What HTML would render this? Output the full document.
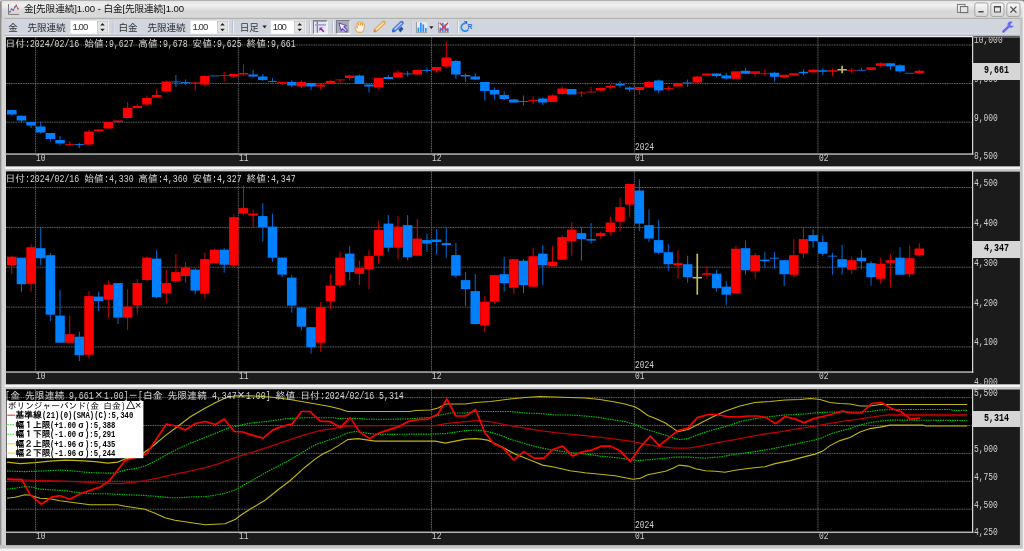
<!DOCTYPE html>
<html lang="ja"><head><meta charset="utf-8"><title>chart</title><style>
html,body{margin:0;padding:0;background:#e6e6e6;}
body{width:1024px;height:551px;overflow:hidden;position:relative;}
svg{position:absolute;left:0;top:0;}
#pg{position:absolute;left:0;top:0;width:1024px;height:551px;overflow:hidden;filter:blur(0.38px);}
.t,.ui{position:absolute;white-space:nowrap;}
#tx{position:absolute;left:0;top:0;width:1024px;height:551px;will-change:transform;}
.t{font-family:"Liberation Mono","IPAGothic",monospace;line-height:10px;color:#d4d4d4;}
.t .l{display:inline-block;white-space:pre;transform-origin:0 50%;vertical-align:baseline;line-height:10px;}
.t .f{display:inline-block;text-align:center;line-height:9px;}
.info{font-size:9.8px;}
.info .l{font-size:10.9px;transform:scaleX(0.7538);}
.info .f{width:9.8px;}
.info .g{font-size:12.7px;}
.ax{font-size:9.8px;}
.ax .l{font-size:10.9px;transform:scaleX(0.7309);}
.ax .f{width:9.8px;}
.ax .g{font-size:12.7px;}
.pb{font-size:9.8px;}
.pb .l{font-size:10.7px;transform:scaleX(0.7788);}
.pb .f{width:9.8px;}
.pb .g{font-size:12.7px;}
.lg{font-size:8.7px;}
.lg .l{font-size:9.7px;transform:scaleX(0.7474);}
.lg .f{width:8.7px;}
.lg .g{font-size:11.3px;}

.ax{color:#cfcfcf;}
.pb{color:#000;background:#d6d6d6;font-weight:bold;text-align:center;}
.cc{position:absolute;overflow:hidden;}
.lg{color:#000;line-height:9.5px;}
.lg .l{line-height:9.5px;}
.b{font-weight:bold;}
.ui{font-family:"Liberation Sans","Noto Sans CJK JP",sans-serif;font-size:9.6px;line-height:12px;color:#111;letter-spacing:-0.08px;}
.tb{color:#333;}
.sp{letter-spacing:-1.0px;}
</style></head><body>
<div id="pg">
<svg width="1024" height="551" viewBox="0 0 1024 551">
<rect x="0.00" y="0.00" width="1024.00" height="551.00" fill="#c8c8c8"/>
<defs><linearGradient id="tg" x1="0" y1="0" x2="0" y2="1"><stop offset="0" stop-color="#e3e3e3"/><stop offset="0.25" stop-color="#f0f0f0"/><stop offset="0.58" stop-color="#d8d8d8"/><stop offset="1" stop-color="#d8d8d8"/></linearGradient><linearGradient id="bg" x1="0" y1="0" x2="0" y2="1"><stop offset="0" stop-color="#fbfbfb"/><stop offset="1" stop-color="#d4d4d4"/></linearGradient></defs>
<rect x="1.40" y="1.00" width="1022.00" height="17.00" fill="url(#tg)"/>
<rect x="0.00" y="0.00" width="1024.00" height="0.90" fill="#adadad"/>
<rect x="1.40" y="17.80" width="1021.40" height="1.20" fill="#b2b2b2"/>
<rect x="4.70" y="19.00" width="1015.30" height="15.90" fill="#d1d5de"/>
<rect x="4.70" y="33.00" width="1015.30" height="1.80" fill="#d8dce3"/>
<rect x="4.70" y="34.80" width="1015.30" height="1.00" fill="#9ca4b2"/>
<rect x="0.00" y="0.00" width="1.60" height="548.60" fill="#8e8e8e"/>
<rect x="1022.50" y="1.00" width="1.50" height="551.00" fill="#f0f0f0"/>
<rect x="1.60" y="18.00" width="3.10" height="530.60" fill="#d4d4d4"/>
<rect x="1019.90" y="18.00" width="2.60" height="530.60" fill="#c4c4c4"/>
<rect x="0.00" y="545.00" width="1022.50" height="3.60" fill="#c4c4c4"/>
<rect x="0.00" y="548.60" width="1024.00" height="2.40" fill="#f2f2f2"/>
<path d="M0 0 H3 A3 3 0 0 0 0 3z" fill="#d8d8d8"/><path d="M1024 0 H1020.5 A3.5 3.5 0 0 1 1024 3.5z" fill="#777"/>
<rect x="5.80" y="37.20" width="1014.10" height="129.20" fill="#1b1b1b"/>
<rect x="4.70" y="35.80" width="1015.30" height="1.60" fill="#f2f2f2"/>
<rect x="973.20" y="36.30" width="46.60" height="1.10" fill="#1b1b1b"/>
<rect x="4.70" y="36.20" width="1.30" height="130.20" fill="#d4d4d4"/>
<rect x="6.00" y="37.40" width="966.40" height="116.00" fill="#000"/>
<rect x="4.70" y="153.40" width="968.70" height="1.30" fill="#c8c8c8"/>
<rect x="972.00" y="36.20" width="1.20" height="118.50" fill="#d8d8d8"/>
<rect x="5.80" y="171.30" width="1014.10" height="213.10" fill="#1b1b1b"/>
<rect x="4.70" y="166.70" width="1015.30" height="2.50" fill="#f4f4f4"/>
<rect x="4.70" y="169.10" width="1015.30" height="2.40" fill="#c8c8c8"/>
<rect x="4.70" y="170.30" width="1.30" height="214.10" fill="#d4d4d4"/>
<rect x="6.00" y="171.50" width="966.40" height="199.90" fill="#000"/>
<rect x="4.70" y="371.40" width="968.70" height="1.30" fill="#c8c8c8"/>
<rect x="972.00" y="170.30" width="1.20" height="202.40" fill="#d8d8d8"/>
<rect x="5.80" y="389.20" width="1014.10" height="155.90" fill="#1b1b1b"/>
<rect x="4.70" y="384.60" width="1015.30" height="2.50" fill="#f4f4f4"/>
<rect x="4.70" y="387.00" width="1015.30" height="2.40" fill="#c8c8c8"/>
<rect x="4.70" y="388.20" width="1.30" height="156.90" fill="#d4d4d4"/>
<rect x="6.00" y="389.40" width="966.40" height="142.20" fill="#000"/>
<rect x="4.70" y="531.60" width="968.70" height="1.30" fill="#c8c8c8"/>
<rect x="972.00" y="388.20" width="1.20" height="144.70" fill="#d8d8d8"/>
<line x1="6.00" y1="45.00" x2="972.40" y2="45.00" stroke="#8c8c8c" stroke-width="0.65" stroke-dasharray="1.7 0.7"/>
<line x1="6.00" y1="83.50" x2="972.40" y2="83.50" stroke="#8c8c8c" stroke-width="0.65" stroke-dasharray="1.7 0.7"/>
<line x1="6.00" y1="122.20" x2="972.40" y2="122.20" stroke="#8c8c8c" stroke-width="0.65" stroke-dasharray="1.7 0.7"/>
<line x1="35.48" y1="37.40" x2="35.48" y2="153.40" stroke="#8c8c8c" stroke-width="0.65" stroke-dasharray="1.7 0.7"/>
<line x1="238.34" y1="37.40" x2="238.34" y2="153.40" stroke="#8c8c8c" stroke-width="0.65" stroke-dasharray="1.7 0.7"/>
<line x1="431.54" y1="37.40" x2="431.54" y2="153.40" stroke="#8c8c8c" stroke-width="0.65" stroke-dasharray="1.7 0.7"/>
<line x1="634.40" y1="37.40" x2="634.40" y2="153.40" stroke="#8c8c8c" stroke-width="0.65" stroke-dasharray="1.7 0.7"/>
<line x1="817.94" y1="37.40" x2="817.94" y2="153.40" stroke="#8c8c8c" stroke-width="0.65" stroke-dasharray="1.7 0.7"/>
<line x1="6.00" y1="187.50" x2="972.40" y2="187.50" stroke="#8c8c8c" stroke-width="0.65" stroke-dasharray="1.7 0.7"/>
<line x1="6.00" y1="227.40" x2="972.40" y2="227.40" stroke="#8c8c8c" stroke-width="0.65" stroke-dasharray="1.7 0.7"/>
<line x1="6.00" y1="267.20" x2="972.40" y2="267.20" stroke="#8c8c8c" stroke-width="0.65" stroke-dasharray="1.7 0.7"/>
<line x1="6.00" y1="307.10" x2="972.40" y2="307.10" stroke="#8c8c8c" stroke-width="0.65" stroke-dasharray="1.7 0.7"/>
<line x1="6.00" y1="346.90" x2="972.40" y2="346.90" stroke="#8c8c8c" stroke-width="0.65" stroke-dasharray="1.7 0.7"/>
<line x1="35.48" y1="171.50" x2="35.48" y2="371.40" stroke="#8c8c8c" stroke-width="0.65" stroke-dasharray="1.7 0.7"/>
<line x1="238.34" y1="171.50" x2="238.34" y2="371.40" stroke="#8c8c8c" stroke-width="0.65" stroke-dasharray="1.7 0.7"/>
<line x1="431.54" y1="171.50" x2="431.54" y2="371.40" stroke="#8c8c8c" stroke-width="0.65" stroke-dasharray="1.7 0.7"/>
<line x1="634.40" y1="171.50" x2="634.40" y2="371.40" stroke="#8c8c8c" stroke-width="0.65" stroke-dasharray="1.7 0.7"/>
<line x1="817.94" y1="171.50" x2="817.94" y2="371.40" stroke="#8c8c8c" stroke-width="0.65" stroke-dasharray="1.7 0.7"/>
<line x1="6.00" y1="397.60" x2="972.40" y2="397.60" stroke="#8c8c8c" stroke-width="0.65" stroke-dasharray="1.7 0.7"/>
<line x1="6.00" y1="425.50" x2="972.40" y2="425.50" stroke="#8c8c8c" stroke-width="0.65" stroke-dasharray="1.7 0.7"/>
<line x1="6.00" y1="453.40" x2="972.40" y2="453.40" stroke="#8c8c8c" stroke-width="0.65" stroke-dasharray="1.7 0.7"/>
<line x1="6.00" y1="481.30" x2="972.40" y2="481.30" stroke="#8c8c8c" stroke-width="0.65" stroke-dasharray="1.7 0.7"/>
<line x1="6.00" y1="509.20" x2="972.40" y2="509.20" stroke="#8c8c8c" stroke-width="0.65" stroke-dasharray="1.7 0.7"/>
<line x1="35.48" y1="389.40" x2="35.48" y2="531.60" stroke="#8c8c8c" stroke-width="0.65" stroke-dasharray="1.7 0.7"/>
<line x1="238.34" y1="389.40" x2="238.34" y2="531.60" stroke="#8c8c8c" stroke-width="0.65" stroke-dasharray="1.7 0.7"/>
<line x1="431.54" y1="389.40" x2="431.54" y2="531.60" stroke="#8c8c8c" stroke-width="0.65" stroke-dasharray="1.7 0.7"/>
<line x1="634.40" y1="389.40" x2="634.40" y2="531.60" stroke="#8c8c8c" stroke-width="0.65" stroke-dasharray="1.7 0.7"/>
<line x1="817.94" y1="389.40" x2="817.94" y2="531.60" stroke="#8c8c8c" stroke-width="0.65" stroke-dasharray="1.7 0.7"/>
<line x1="11.78" y1="110.00" x2="11.78" y2="115.50" stroke="#0080ff" stroke-width="0.85"/>
<rect x="7.03" y="110.00" width="9.50" height="4.50" fill="#0080ff"/>
<line x1="21.43" y1="115.75" x2="21.43" y2="122.00" stroke="#0080ff" stroke-width="0.85"/>
<rect x="16.68" y="115.75" width="9.50" height="4.75" fill="#0080ff"/>
<line x1="31.09" y1="122.00" x2="31.09" y2="128.00" stroke="#0080ff" stroke-width="0.85"/>
<rect x="26.34" y="122.00" width="9.50" height="3.50" fill="#0080ff"/>
<line x1="40.74" y1="121.50" x2="40.74" y2="133.50" stroke="#0080ff" stroke-width="0.85"/>
<rect x="35.99" y="126.50" width="9.50" height="6.00" fill="#0080ff"/>
<line x1="50.40" y1="133.00" x2="50.40" y2="141.50" stroke="#0080ff" stroke-width="0.85"/>
<rect x="45.65" y="133.00" width="9.50" height="6.00" fill="#0080ff"/>
<line x1="60.05" y1="136.00" x2="60.05" y2="145.50" stroke="#0080ff" stroke-width="0.85"/>
<rect x="55.30" y="140.00" width="9.50" height="3.50" fill="#0080ff"/>
<line x1="69.71" y1="141.00" x2="69.71" y2="145.00" stroke="#ff0000" stroke-width="0.85"/>
<rect x="64.96" y="144.00" width="9.50" height="0.85" fill="#ff0000"/>
<line x1="79.36" y1="143.00" x2="79.36" y2="148.00" stroke="#0080ff" stroke-width="0.85"/>
<rect x="74.61" y="144.00" width="9.50" height="0.85" fill="#0080ff"/>
<line x1="89.02" y1="130.00" x2="89.02" y2="145.00" stroke="#ff0000" stroke-width="0.85"/>
<rect x="84.27" y="131.50" width="9.50" height="13.00" fill="#ff0000"/>
<line x1="98.67" y1="129.50" x2="98.67" y2="132.50" stroke="#ff0000" stroke-width="0.85"/>
<rect x="93.92" y="129.50" width="9.50" height="1.50" fill="#ff0000"/>
<rect x="103.58" y="122.00" width="9.50" height="6.50" fill="#ff0000"/>
<line x1="117.98" y1="120.50" x2="117.98" y2="123.00" stroke="#ff0000" stroke-width="0.85"/>
<rect x="113.23" y="120.50" width="9.50" height="1.50" fill="#ff0000"/>
<line x1="127.64" y1="102.00" x2="127.64" y2="118.00" stroke="#ff0000" stroke-width="0.85"/>
<rect x="122.89" y="108.00" width="9.50" height="10.00" fill="#ff0000"/>
<line x1="137.29" y1="104.50" x2="137.29" y2="108.00" stroke="#ff0000" stroke-width="0.85"/>
<rect x="132.54" y="106.00" width="9.50" height="2.00" fill="#ff0000"/>
<line x1="146.95" y1="95.50" x2="146.95" y2="106.00" stroke="#ff0000" stroke-width="0.85"/>
<rect x="142.20" y="98.00" width="9.50" height="6.50" fill="#ff0000"/>
<line x1="156.60" y1="89.50" x2="156.60" y2="97.50" stroke="#ff0000" stroke-width="0.85"/>
<rect x="151.85" y="95.00" width="9.50" height="2.50" fill="#ff0000"/>
<line x1="166.26" y1="80.50" x2="166.26" y2="92.50" stroke="#ff0000" stroke-width="0.85"/>
<rect x="161.51" y="81.50" width="9.50" height="10.00" fill="#ff0000"/>
<line x1="175.91" y1="75.00" x2="175.91" y2="87.00" stroke="#0080ff" stroke-width="0.85"/>
<rect x="171.16" y="81.50" width="9.50" height="0.85" fill="#0080ff"/>
<line x1="185.57" y1="79.50" x2="185.57" y2="85.00" stroke="#0080ff" stroke-width="0.85"/>
<rect x="180.82" y="82.00" width="9.50" height="0.85" fill="#0080ff"/>
<line x1="195.22" y1="82.00" x2="195.22" y2="90.50" stroke="#ff0000" stroke-width="0.85"/>
<rect x="190.47" y="82.50" width="9.50" height="0.85" fill="#ff0000"/>
<line x1="204.88" y1="75.00" x2="204.88" y2="86.50" stroke="#ff0000" stroke-width="0.85"/>
<rect x="200.13" y="76.00" width="9.50" height="8.50" fill="#ff0000"/>
<rect x="209.78" y="75.50" width="9.50" height="0.85" fill="#0080ff"/>
<line x1="224.19" y1="72.00" x2="224.19" y2="81.50" stroke="#ff0000" stroke-width="0.85"/>
<rect x="219.44" y="75.00" width="9.50" height="0.85" fill="#ff0000"/>
<line x1="233.84" y1="74.00" x2="233.84" y2="78.00" stroke="#ff0000" stroke-width="0.85"/>
<rect x="229.09" y="74.00" width="9.50" height="2.50" fill="#ff0000"/>
<line x1="243.50" y1="64.50" x2="243.50" y2="75.50" stroke="#ff0000" stroke-width="0.85"/>
<rect x="238.75" y="73.00" width="9.50" height="1.50" fill="#ff0000"/>
<line x1="253.15" y1="70.00" x2="253.15" y2="77.50" stroke="#0080ff" stroke-width="0.85"/>
<rect x="248.40" y="74.50" width="9.50" height="2.00" fill="#0080ff"/>
<line x1="262.81" y1="74.00" x2="262.81" y2="81.00" stroke="#0080ff" stroke-width="0.85"/>
<rect x="258.06" y="76.50" width="9.50" height="3.50" fill="#0080ff"/>
<line x1="272.46" y1="78.00" x2="272.46" y2="82.50" stroke="#0080ff" stroke-width="0.85"/>
<rect x="267.71" y="81.00" width="9.50" height="0.85" fill="#0080ff"/>
<line x1="282.12" y1="82.00" x2="282.12" y2="85.50" stroke="#ff0000" stroke-width="0.85"/>
<rect x="277.37" y="82.00" width="9.50" height="0.85" fill="#ff0000"/>
<line x1="291.77" y1="80.00" x2="291.77" y2="87.00" stroke="#0080ff" stroke-width="0.85"/>
<rect x="287.02" y="82.00" width="9.50" height="3.50" fill="#0080ff"/>
<line x1="301.43" y1="80.50" x2="301.43" y2="88.00" stroke="#ff0000" stroke-width="0.85"/>
<rect x="296.68" y="82.00" width="9.50" height="4.50" fill="#ff0000"/>
<line x1="311.08" y1="83.00" x2="311.08" y2="90.00" stroke="#0080ff" stroke-width="0.85"/>
<rect x="306.33" y="83.00" width="9.50" height="3.50" fill="#0080ff"/>
<line x1="320.74" y1="83.00" x2="320.74" y2="90.00" stroke="#ff0000" stroke-width="0.85"/>
<rect x="315.99" y="84.50" width="9.50" height="2.00" fill="#ff0000"/>
<line x1="330.39" y1="80.00" x2="330.39" y2="84.00" stroke="#ff0000" stroke-width="0.85"/>
<rect x="325.64" y="81.00" width="9.50" height="3.00" fill="#ff0000"/>
<line x1="340.05" y1="79.50" x2="340.05" y2="83.50" stroke="#ff0000" stroke-width="0.85"/>
<rect x="335.30" y="79.50" width="9.50" height="0.85" fill="#ff0000"/>
<line x1="349.70" y1="75.00" x2="349.70" y2="80.50" stroke="#ff0000" stroke-width="0.85"/>
<rect x="344.95" y="75.50" width="9.50" height="2.50" fill="#ff0000"/>
<line x1="359.36" y1="74.50" x2="359.36" y2="84.00" stroke="#0080ff" stroke-width="0.85"/>
<rect x="354.61" y="75.50" width="9.50" height="8.50" fill="#0080ff"/>
<line x1="369.01" y1="84.50" x2="369.01" y2="92.50" stroke="#0080ff" stroke-width="0.85"/>
<rect x="364.26" y="84.50" width="9.50" height="2.00" fill="#0080ff"/>
<line x1="378.67" y1="78.00" x2="378.67" y2="89.50" stroke="#ff0000" stroke-width="0.85"/>
<rect x="373.92" y="78.00" width="9.50" height="9.50" fill="#ff0000"/>
<line x1="388.32" y1="75.00" x2="388.32" y2="79.00" stroke="#0080ff" stroke-width="0.85"/>
<rect x="383.57" y="77.00" width="9.50" height="2.00" fill="#0080ff"/>
<line x1="397.98" y1="70.00" x2="397.98" y2="77.50" stroke="#ff0000" stroke-width="0.85"/>
<rect x="393.23" y="72.50" width="9.50" height="5.00" fill="#ff0000"/>
<line x1="407.63" y1="71.00" x2="407.63" y2="76.50" stroke="#0080ff" stroke-width="0.85"/>
<rect x="402.88" y="73.50" width="9.50" height="0.85" fill="#0080ff"/>
<line x1="417.29" y1="69.50" x2="417.29" y2="75.50" stroke="#ff0000" stroke-width="0.85"/>
<rect x="412.54" y="70.00" width="9.50" height="4.50" fill="#ff0000"/>
<line x1="426.94" y1="67.50" x2="426.94" y2="72.50" stroke="#0080ff" stroke-width="0.85"/>
<rect x="422.19" y="70.00" width="9.50" height="0.85" fill="#0080ff"/>
<line x1="436.60" y1="67.00" x2="436.60" y2="72.50" stroke="#ff0000" stroke-width="0.85"/>
<rect x="431.85" y="67.00" width="9.50" height="3.50" fill="#ff0000"/>
<line x1="446.25" y1="41.50" x2="446.25" y2="68.00" stroke="#ff0000" stroke-width="0.85"/>
<rect x="441.50" y="57.50" width="9.50" height="9.00" fill="#ff0000"/>
<line x1="455.91" y1="60.00" x2="455.91" y2="79.00" stroke="#0080ff" stroke-width="0.85"/>
<rect x="451.16" y="61.00" width="9.50" height="13.50" fill="#0080ff"/>
<line x1="465.56" y1="73.50" x2="465.56" y2="82.00" stroke="#0080ff" stroke-width="0.85"/>
<rect x="460.81" y="75.00" width="9.50" height="1.50" fill="#0080ff"/>
<line x1="475.22" y1="73.50" x2="475.22" y2="79.50" stroke="#0080ff" stroke-width="0.85"/>
<rect x="470.47" y="76.50" width="9.50" height="3.00" fill="#0080ff"/>
<line x1="484.87" y1="82.00" x2="484.87" y2="100.50" stroke="#0080ff" stroke-width="0.85"/>
<rect x="480.12" y="82.00" width="9.50" height="9.00" fill="#0080ff"/>
<line x1="494.53" y1="87.50" x2="494.53" y2="99.50" stroke="#0080ff" stroke-width="0.85"/>
<rect x="489.78" y="90.00" width="9.50" height="4.50" fill="#0080ff"/>
<line x1="504.18" y1="91.50" x2="504.18" y2="100.00" stroke="#0080ff" stroke-width="0.85"/>
<rect x="499.43" y="95.00" width="9.50" height="4.00" fill="#0080ff"/>
<line x1="513.84" y1="99.00" x2="513.84" y2="102.50" stroke="#0080ff" stroke-width="0.85"/>
<rect x="509.09" y="99.50" width="9.50" height="3.00" fill="#0080ff"/>
<line x1="523.50" y1="95.50" x2="523.50" y2="105.50" stroke="#0080ff" stroke-width="0.85"/>
<rect x="518.75" y="101.00" width="9.50" height="0.85" fill="#0080ff"/>
<line x1="533.15" y1="96.50" x2="533.15" y2="104.00" stroke="#ff0000" stroke-width="0.85"/>
<rect x="528.40" y="100.00" width="9.50" height="0.85" fill="#ff0000"/>
<line x1="542.80" y1="97.50" x2="542.80" y2="105.00" stroke="#0080ff" stroke-width="0.85"/>
<rect x="538.05" y="98.50" width="9.50" height="4.00" fill="#0080ff"/>
<line x1="552.46" y1="94.50" x2="552.46" y2="102.00" stroke="#ff0000" stroke-width="0.85"/>
<rect x="547.71" y="95.50" width="9.50" height="6.50" fill="#ff0000"/>
<line x1="562.11" y1="86.50" x2="562.11" y2="94.50" stroke="#ff0000" stroke-width="0.85"/>
<rect x="557.36" y="88.50" width="9.50" height="5.50" fill="#ff0000"/>
<rect x="567.02" y="89.00" width="9.50" height="5.50" fill="#0080ff"/>
<line x1="581.42" y1="91.00" x2="581.42" y2="97.00" stroke="#ff0000" stroke-width="0.85"/>
<rect x="576.67" y="92.50" width="9.50" height="0.85" fill="#ff0000"/>
<line x1="591.08" y1="87.00" x2="591.08" y2="92.50" stroke="#ff0000" stroke-width="0.85"/>
<rect x="586.33" y="91.50" width="9.50" height="0.85" fill="#ff0000"/>
<line x1="600.73" y1="87.50" x2="600.73" y2="91.00" stroke="#ff0000" stroke-width="0.85"/>
<rect x="595.98" y="88.00" width="9.50" height="2.50" fill="#ff0000"/>
<line x1="610.39" y1="84.50" x2="610.39" y2="89.50" stroke="#ff0000" stroke-width="0.85"/>
<rect x="605.64" y="86.00" width="9.50" height="1.50" fill="#ff0000"/>
<line x1="620.04" y1="81.00" x2="620.04" y2="87.50" stroke="#0080ff" stroke-width="0.85"/>
<rect x="615.29" y="84.00" width="9.50" height="1.50" fill="#0080ff"/>
<line x1="629.70" y1="86.50" x2="629.70" y2="92.00" stroke="#0080ff" stroke-width="0.85"/>
<rect x="624.95" y="87.50" width="9.50" height="2.00" fill="#0080ff"/>
<line x1="639.35" y1="87.00" x2="639.35" y2="94.50" stroke="#ff0000" stroke-width="0.85"/>
<rect x="634.60" y="87.00" width="9.50" height="3.00" fill="#ff0000"/>
<line x1="649.01" y1="81.00" x2="649.01" y2="87.50" stroke="#ff0000" stroke-width="0.85"/>
<rect x="644.26" y="82.00" width="9.50" height="5.50" fill="#ff0000"/>
<line x1="658.66" y1="79.50" x2="658.66" y2="93.00" stroke="#0080ff" stroke-width="0.85"/>
<rect x="653.91" y="80.50" width="9.50" height="10.00" fill="#0080ff"/>
<line x1="668.32" y1="86.00" x2="668.32" y2="90.50" stroke="#ff0000" stroke-width="0.85"/>
<rect x="663.57" y="88.00" width="9.50" height="0.85" fill="#ff0000"/>
<rect x="673.22" y="83.00" width="9.50" height="3.50" fill="#ff0000"/>
<line x1="687.63" y1="79.50" x2="687.63" y2="87.00" stroke="#0080ff" stroke-width="0.85"/>
<rect x="682.88" y="82.50" width="9.50" height="0.85" fill="#0080ff"/>
<line x1="697.28" y1="75.50" x2="697.28" y2="82.50" stroke="#ff0000" stroke-width="0.85"/>
<rect x="692.53" y="76.50" width="9.50" height="6.00" fill="#ff0000"/>
<rect x="702.19" y="73.50" width="9.50" height="2.00" fill="#ff0000"/>
<line x1="716.59" y1="73.50" x2="716.59" y2="77.50" stroke="#0080ff" stroke-width="0.85"/>
<rect x="711.84" y="73.50" width="9.50" height="2.50" fill="#0080ff"/>
<line x1="726.25" y1="73.00" x2="726.25" y2="79.50" stroke="#0080ff" stroke-width="0.85"/>
<rect x="721.50" y="75.50" width="9.50" height="3.00" fill="#0080ff"/>
<rect x="731.15" y="71.30" width="9.50" height="7.50" fill="#ff0000"/>
<line x1="745.56" y1="67.80" x2="745.56" y2="73.80" stroke="#0080ff" stroke-width="0.85"/>
<rect x="740.81" y="70.80" width="9.50" height="3.00" fill="#0080ff"/>
<line x1="755.21" y1="71.30" x2="755.21" y2="76.30" stroke="#ff0000" stroke-width="0.85"/>
<rect x="750.46" y="71.30" width="9.50" height="2.50" fill="#ff0000"/>
<line x1="764.87" y1="69.30" x2="764.87" y2="75.80" stroke="#ff0000" stroke-width="0.85"/>
<rect x="760.12" y="73.30" width="9.50" height="0.85" fill="#ff0000"/>
<line x1="774.52" y1="71.80" x2="774.52" y2="81.80" stroke="#0080ff" stroke-width="0.85"/>
<rect x="769.77" y="72.80" width="9.50" height="4.00" fill="#0080ff"/>
<line x1="784.18" y1="74.80" x2="784.18" y2="78.30" stroke="#ff0000" stroke-width="0.85"/>
<rect x="779.43" y="74.80" width="9.50" height="2.50" fill="#ff0000"/>
<rect x="789.08" y="73.30" width="9.50" height="2.00" fill="#ff0000"/>
<line x1="803.49" y1="69.30" x2="803.49" y2="75.30" stroke="#0080ff" stroke-width="0.85"/>
<rect x="798.74" y="71.80" width="9.50" height="1.50" fill="#0080ff"/>
<line x1="813.14" y1="68.80" x2="813.14" y2="72.30" stroke="#ff0000" stroke-width="0.85"/>
<rect x="808.39" y="69.80" width="9.50" height="2.50" fill="#ff0000"/>
<line x1="822.80" y1="68.30" x2="822.80" y2="74.80" stroke="#0080ff" stroke-width="0.85"/>
<rect x="818.05" y="70.30" width="9.50" height="1.50" fill="#0080ff"/>
<line x1="832.45" y1="68.30" x2="832.45" y2="76.30" stroke="#ff0000" stroke-width="0.85"/>
<rect x="827.70" y="70.30" width="9.50" height="1.50" fill="#ff0000"/>
<line x1="842.11" y1="65.80" x2="842.11" y2="73.30" stroke="#c4bc5c" stroke-width="1.7"/>
<line x1="837.36" y1="69.80" x2="846.86" y2="69.80" stroke="#c4bc5c" stroke-width="1.5"/>
<line x1="851.76" y1="67.80" x2="851.76" y2="73.80" stroke="#ff0000" stroke-width="0.85"/>
<rect x="847.01" y="69.80" width="9.50" height="0.85" fill="#ff0000"/>
<line x1="861.42" y1="67.80" x2="861.42" y2="70.80" stroke="#0080ff" stroke-width="0.85"/>
<rect x="856.67" y="69.80" width="9.50" height="0.85" fill="#0080ff"/>
<rect x="866.32" y="67.30" width="9.50" height="2.50" fill="#ff0000"/>
<line x1="880.73" y1="62.30" x2="880.73" y2="67.30" stroke="#ff0000" stroke-width="0.85"/>
<rect x="875.98" y="63.30" width="9.50" height="2.50" fill="#ff0000"/>
<line x1="890.38" y1="63.30" x2="890.38" y2="69.80" stroke="#0080ff" stroke-width="0.85"/>
<rect x="885.63" y="63.30" width="9.50" height="3.00" fill="#0080ff"/>
<line x1="900.04" y1="64.30" x2="900.04" y2="72.80" stroke="#0080ff" stroke-width="0.85"/>
<rect x="895.29" y="65.30" width="9.50" height="6.00" fill="#0080ff"/>
<rect x="904.94" y="72.80" width="9.50" height="0.85" fill="#0080ff"/>
<line x1="919.35" y1="69.50" x2="919.35" y2="73.60" stroke="#ff0000" stroke-width="0.85"/>
<rect x="914.60" y="70.80" width="9.50" height="2.50" fill="#ff0000"/>
<line x1="11.78" y1="255.70" x2="11.78" y2="274.20" stroke="#ff0000" stroke-width="0.85"/>
<rect x="7.03" y="256.70" width="9.50" height="8.50" fill="#ff0000"/>
<line x1="21.43" y1="257.70" x2="21.43" y2="292.20" stroke="#0080ff" stroke-width="0.85"/>
<rect x="16.68" y="257.70" width="9.50" height="26.50" fill="#0080ff"/>
<line x1="31.09" y1="244.20" x2="31.09" y2="291.70" stroke="#ff0000" stroke-width="0.85"/>
<rect x="26.34" y="247.20" width="9.50" height="36.50" fill="#ff0000"/>
<line x1="40.74" y1="227.10" x2="40.74" y2="265.20" stroke="#0080ff" stroke-width="0.85"/>
<rect x="35.99" y="248.20" width="9.50" height="10.00" fill="#0080ff"/>
<line x1="50.40" y1="253.20" x2="50.40" y2="321.10" stroke="#0080ff" stroke-width="0.85"/>
<rect x="45.65" y="255.20" width="9.50" height="59.40" fill="#0080ff"/>
<line x1="60.05" y1="290.10" x2="60.05" y2="342.70" stroke="#0080ff" stroke-width="0.85"/>
<rect x="55.30" y="315.60" width="9.50" height="27.10" fill="#0080ff"/>
<line x1="69.71" y1="315.60" x2="69.71" y2="343.70" stroke="#ff0000" stroke-width="0.85"/>
<rect x="64.96" y="334.20" width="9.50" height="8.50" fill="#ff0000"/>
<line x1="79.36" y1="331.70" x2="79.36" y2="361.20" stroke="#0080ff" stroke-width="0.85"/>
<rect x="74.61" y="336.70" width="9.50" height="18.50" fill="#0080ff"/>
<line x1="89.02" y1="291.10" x2="89.02" y2="358.70" stroke="#ff0000" stroke-width="0.85"/>
<rect x="84.27" y="296.10" width="9.50" height="58.60" fill="#ff0000"/>
<line x1="98.67" y1="291.60" x2="98.67" y2="311.10" stroke="#0080ff" stroke-width="0.85"/>
<rect x="93.92" y="296.60" width="9.50" height="4.50" fill="#0080ff"/>
<line x1="108.33" y1="280.60" x2="108.33" y2="318.10" stroke="#ff0000" stroke-width="0.85"/>
<rect x="103.58" y="284.60" width="9.50" height="15.00" fill="#ff0000"/>
<line x1="117.98" y1="283.10" x2="117.98" y2="324.10" stroke="#0080ff" stroke-width="0.85"/>
<rect x="113.23" y="283.10" width="9.50" height="34.50" fill="#0080ff"/>
<line x1="127.64" y1="289.10" x2="127.64" y2="330.20" stroke="#ff0000" stroke-width="0.85"/>
<rect x="122.89" y="306.60" width="9.50" height="11.00" fill="#ff0000"/>
<line x1="137.29" y1="279.10" x2="137.29" y2="313.60" stroke="#ff0000" stroke-width="0.85"/>
<rect x="132.54" y="283.10" width="9.50" height="22.00" fill="#ff0000"/>
<line x1="146.95" y1="256.70" x2="146.95" y2="281.20" stroke="#ff0000" stroke-width="0.85"/>
<rect x="142.20" y="257.60" width="9.50" height="22.40" fill="#ff0000"/>
<line x1="156.60" y1="250.20" x2="156.60" y2="298.20" stroke="#0080ff" stroke-width="0.85"/>
<rect x="151.85" y="258.60" width="9.50" height="38.60" fill="#0080ff"/>
<line x1="166.26" y1="270.10" x2="166.26" y2="303.50" stroke="#ff0000" stroke-width="0.85"/>
<rect x="161.51" y="283.10" width="9.50" height="9.90" fill="#ff0000"/>
<line x1="175.91" y1="254.10" x2="175.91" y2="282.60" stroke="#ff0000" stroke-width="0.85"/>
<rect x="171.16" y="272.10" width="9.50" height="9.00" fill="#ff0000"/>
<line x1="185.57" y1="262.10" x2="185.57" y2="283.00" stroke="#ff0000" stroke-width="0.85"/>
<rect x="180.82" y="267.60" width="9.50" height="8.50" fill="#ff0000"/>
<line x1="195.22" y1="268.20" x2="195.22" y2="294.10" stroke="#0080ff" stroke-width="0.85"/>
<rect x="190.47" y="269.60" width="9.50" height="21.00" fill="#0080ff"/>
<line x1="204.88" y1="252.60" x2="204.88" y2="298.70" stroke="#ff0000" stroke-width="0.85"/>
<rect x="200.13" y="259.10" width="9.50" height="34.50" fill="#ff0000"/>
<line x1="214.53" y1="248.70" x2="214.53" y2="263.20" stroke="#ff0000" stroke-width="0.85"/>
<rect x="209.78" y="249.70" width="9.50" height="13.50" fill="#ff0000"/>
<line x1="224.19" y1="248.20" x2="224.19" y2="272.70" stroke="#0080ff" stroke-width="0.85"/>
<rect x="219.44" y="249.70" width="9.50" height="15.00" fill="#0080ff"/>
<line x1="233.84" y1="214.60" x2="233.84" y2="267.70" stroke="#ff0000" stroke-width="0.85"/>
<rect x="229.09" y="217.10" width="9.50" height="48.10" fill="#ff0000"/>
<line x1="243.50" y1="185.50" x2="243.50" y2="215.10" stroke="#ff0000" stroke-width="0.85"/>
<rect x="238.75" y="208.10" width="9.50" height="5.50" fill="#ff0000"/>
<line x1="253.15" y1="209.60" x2="253.15" y2="227.10" stroke="#ff0000" stroke-width="0.85"/>
<rect x="248.40" y="213.60" width="9.50" height="2.00" fill="#ff0000"/>
<line x1="262.81" y1="203.10" x2="262.81" y2="241.60" stroke="#0080ff" stroke-width="0.85"/>
<rect x="258.06" y="216.10" width="9.50" height="11.00" fill="#0080ff"/>
<line x1="272.46" y1="213.60" x2="272.46" y2="261.70" stroke="#0080ff" stroke-width="0.85"/>
<rect x="267.71" y="226.60" width="9.50" height="31.10" fill="#0080ff"/>
<line x1="282.12" y1="257.60" x2="282.12" y2="277.10" stroke="#0080ff" stroke-width="0.85"/>
<rect x="277.37" y="257.60" width="9.50" height="17.00" fill="#0080ff"/>
<line x1="291.77" y1="275.20" x2="291.77" y2="312.60" stroke="#0080ff" stroke-width="0.85"/>
<rect x="287.02" y="277.60" width="9.50" height="28.00" fill="#0080ff"/>
<line x1="301.43" y1="307.60" x2="301.43" y2="330.70" stroke="#0080ff" stroke-width="0.85"/>
<rect x="296.68" y="307.60" width="9.50" height="19.10" fill="#0080ff"/>
<line x1="311.08" y1="327.20" x2="311.08" y2="353.70" stroke="#0080ff" stroke-width="0.85"/>
<rect x="306.33" y="327.20" width="9.50" height="20.00" fill="#0080ff"/>
<line x1="320.74" y1="302.10" x2="320.74" y2="352.20" stroke="#ff0000" stroke-width="0.85"/>
<rect x="315.99" y="307.10" width="9.50" height="35.60" fill="#ff0000"/>
<line x1="330.39" y1="274.10" x2="330.39" y2="309.10" stroke="#ff0000" stroke-width="0.85"/>
<rect x="325.64" y="285.60" width="9.50" height="15.60" fill="#ff0000"/>
<line x1="340.05" y1="251.80" x2="340.05" y2="287.90" stroke="#ff0000" stroke-width="0.85"/>
<rect x="335.30" y="257.60" width="9.50" height="27.50" fill="#ff0000"/>
<line x1="349.70" y1="246.20" x2="349.70" y2="280.40" stroke="#0080ff" stroke-width="0.85"/>
<rect x="344.95" y="253.60" width="9.50" height="18.50" fill="#0080ff"/>
<line x1="359.36" y1="260.60" x2="359.36" y2="285.10" stroke="#ff0000" stroke-width="0.85"/>
<rect x="354.61" y="268.10" width="9.50" height="5.70" fill="#ff0000"/>
<line x1="369.01" y1="249.70" x2="369.01" y2="289.40" stroke="#ff0000" stroke-width="0.85"/>
<rect x="364.26" y="256.10" width="9.50" height="13.00" fill="#ff0000"/>
<line x1="378.67" y1="221.10" x2="378.67" y2="263.70" stroke="#ff0000" stroke-width="0.85"/>
<rect x="373.92" y="230.10" width="9.50" height="25.60" fill="#ff0000"/>
<line x1="388.32" y1="215.10" x2="388.32" y2="252.20" stroke="#0080ff" stroke-width="0.85"/>
<rect x="383.57" y="223.60" width="9.50" height="24.10" fill="#0080ff"/>
<line x1="397.98" y1="216.10" x2="397.98" y2="259.20" stroke="#ff0000" stroke-width="0.85"/>
<rect x="393.23" y="226.60" width="9.50" height="21.10" fill="#ff0000"/>
<line x1="407.63" y1="215.10" x2="407.63" y2="260.20" stroke="#0080ff" stroke-width="0.85"/>
<rect x="402.88" y="225.10" width="9.50" height="32.10" fill="#0080ff"/>
<line x1="417.29" y1="219.10" x2="417.29" y2="255.70" stroke="#ff0000" stroke-width="0.85"/>
<rect x="412.54" y="238.60" width="9.50" height="17.10" fill="#ff0000"/>
<line x1="426.94" y1="233.60" x2="426.94" y2="251.70" stroke="#0080ff" stroke-width="0.85"/>
<rect x="422.19" y="240.10" width="9.50" height="3.50" fill="#0080ff"/>
<line x1="436.60" y1="229.10" x2="436.60" y2="254.70" stroke="#0080ff" stroke-width="0.85"/>
<rect x="431.85" y="239.60" width="9.50" height="2.50" fill="#0080ff"/>
<line x1="446.25" y1="227.60" x2="446.25" y2="257.70" stroke="#0080ff" stroke-width="0.85"/>
<rect x="441.50" y="243.10" width="9.50" height="2.00" fill="#0080ff"/>
<line x1="455.91" y1="243.10" x2="455.91" y2="277.90" stroke="#0080ff" stroke-width="0.85"/>
<rect x="451.16" y="255.10" width="9.50" height="20.50" fill="#0080ff"/>
<line x1="465.56" y1="272.10" x2="465.56" y2="306.10" stroke="#0080ff" stroke-width="0.85"/>
<rect x="460.81" y="280.10" width="9.50" height="9.00" fill="#0080ff"/>
<line x1="475.22" y1="274.10" x2="475.22" y2="324.10" stroke="#0080ff" stroke-width="0.85"/>
<rect x="470.47" y="291.10" width="9.50" height="33.00" fill="#0080ff"/>
<line x1="484.87" y1="296.00" x2="484.87" y2="332.20" stroke="#ff0000" stroke-width="0.85"/>
<rect x="480.12" y="301.70" width="9.50" height="23.80" fill="#ff0000"/>
<line x1="494.53" y1="275.10" x2="494.53" y2="303.00" stroke="#ff0000" stroke-width="0.85"/>
<rect x="489.78" y="275.10" width="9.50" height="26.60" fill="#ff0000"/>
<line x1="504.18" y1="256.70" x2="504.18" y2="291.70" stroke="#0080ff" stroke-width="0.85"/>
<rect x="499.43" y="274.20" width="9.50" height="9.00" fill="#0080ff"/>
<line x1="513.84" y1="259.20" x2="513.84" y2="294.20" stroke="#ff0000" stroke-width="0.85"/>
<rect x="509.09" y="259.20" width="9.50" height="28.50" fill="#ff0000"/>
<line x1="523.50" y1="259.20" x2="523.50" y2="293.20" stroke="#0080ff" stroke-width="0.85"/>
<rect x="518.75" y="260.70" width="9.50" height="24.50" fill="#0080ff"/>
<line x1="533.15" y1="248.20" x2="533.15" y2="286.70" stroke="#ff0000" stroke-width="0.85"/>
<rect x="528.40" y="256.20" width="9.50" height="30.50" fill="#ff0000"/>
<line x1="542.80" y1="245.20" x2="542.80" y2="285.20" stroke="#0080ff" stroke-width="0.85"/>
<rect x="538.05" y="253.70" width="9.50" height="11.50" fill="#0080ff"/>
<line x1="552.46" y1="246.20" x2="552.46" y2="266.20" stroke="#ff0000" stroke-width="0.85"/>
<rect x="547.71" y="261.70" width="9.50" height="4.50" fill="#ff0000"/>
<line x1="562.11" y1="235.10" x2="562.11" y2="259.70" stroke="#ff0000" stroke-width="0.85"/>
<rect x="557.36" y="237.10" width="9.50" height="22.60" fill="#ff0000"/>
<line x1="571.77" y1="222.10" x2="571.77" y2="255.70" stroke="#ff0000" stroke-width="0.85"/>
<rect x="567.02" y="229.60" width="9.50" height="11.50" fill="#ff0000"/>
<line x1="581.42" y1="227.60" x2="581.42" y2="260.70" stroke="#0080ff" stroke-width="0.85"/>
<rect x="576.67" y="233.10" width="9.50" height="6.00" fill="#0080ff"/>
<line x1="591.08" y1="223.10" x2="591.08" y2="243.60" stroke="#0080ff" stroke-width="0.85"/>
<rect x="586.33" y="239.10" width="9.50" height="1.50" fill="#0080ff"/>
<line x1="600.73" y1="231.60" x2="600.73" y2="238.60" stroke="#ff0000" stroke-width="0.85"/>
<rect x="595.98" y="233.10" width="9.50" height="3.00" fill="#ff0000"/>
<line x1="610.39" y1="216.60" x2="610.39" y2="235.10" stroke="#ff0000" stroke-width="0.85"/>
<rect x="605.64" y="222.60" width="9.50" height="9.50" fill="#ff0000"/>
<line x1="620.04" y1="197.60" x2="620.04" y2="231.60" stroke="#ff0000" stroke-width="0.85"/>
<rect x="615.29" y="207.10" width="9.50" height="14.50" fill="#ff0000"/>
<line x1="629.70" y1="184.00" x2="629.70" y2="217.10" stroke="#ff0000" stroke-width="0.85"/>
<rect x="624.95" y="184.00" width="9.50" height="20.60" fill="#ff0000"/>
<line x1="639.35" y1="179.50" x2="639.35" y2="231.10" stroke="#0080ff" stroke-width="0.85"/>
<rect x="634.60" y="190.50" width="9.50" height="33.10" fill="#0080ff"/>
<line x1="649.01" y1="209.60" x2="649.01" y2="242.10" stroke="#0080ff" stroke-width="0.85"/>
<rect x="644.26" y="225.10" width="9.50" height="13.50" fill="#0080ff"/>
<line x1="658.66" y1="220.10" x2="658.66" y2="254.20" stroke="#0080ff" stroke-width="0.85"/>
<rect x="653.91" y="240.10" width="9.50" height="12.60" fill="#0080ff"/>
<line x1="668.32" y1="244.20" x2="668.32" y2="270.70" stroke="#0080ff" stroke-width="0.85"/>
<rect x="663.57" y="252.20" width="9.50" height="12.00" fill="#0080ff"/>
<line x1="677.97" y1="250.20" x2="677.97" y2="278.70" stroke="#ff0000" stroke-width="0.85"/>
<rect x="673.22" y="263.20" width="9.50" height="2.00" fill="#ff0000"/>
<line x1="687.63" y1="255.70" x2="687.63" y2="282.70" stroke="#0080ff" stroke-width="0.85"/>
<rect x="682.88" y="264.20" width="9.50" height="13.00" fill="#0080ff"/>
<line x1="697.28" y1="253.70" x2="697.28" y2="294.70" stroke="#c4bc5c" stroke-width="1.7"/>
<line x1="692.53" y1="277.70" x2="702.03" y2="277.70" stroke="#c4bc5c" stroke-width="1.5"/>
<line x1="706.94" y1="266.20" x2="706.94" y2="278.70" stroke="#ff0000" stroke-width="0.85"/>
<rect x="702.19" y="273.20" width="9.50" height="1.50" fill="#ff0000"/>
<line x1="716.59" y1="270.20" x2="716.59" y2="291.70" stroke="#0080ff" stroke-width="0.85"/>
<rect x="711.84" y="273.70" width="9.50" height="14.50" fill="#0080ff"/>
<line x1="726.25" y1="281.10" x2="726.25" y2="305.00" stroke="#0080ff" stroke-width="0.85"/>
<rect x="721.50" y="286.70" width="9.50" height="8.00" fill="#0080ff"/>
<line x1="735.90" y1="245.70" x2="735.90" y2="293.20" stroke="#ff0000" stroke-width="0.85"/>
<rect x="731.15" y="248.70" width="9.50" height="44.50" fill="#ff0000"/>
<line x1="745.56" y1="240.60" x2="745.56" y2="274.70" stroke="#0080ff" stroke-width="0.85"/>
<rect x="740.81" y="248.20" width="9.50" height="22.00" fill="#0080ff"/>
<line x1="755.21" y1="253.20" x2="755.21" y2="278.70" stroke="#ff0000" stroke-width="0.85"/>
<rect x="750.46" y="255.20" width="9.50" height="16.00" fill="#ff0000"/>
<line x1="764.87" y1="252.20" x2="764.87" y2="267.20" stroke="#0080ff" stroke-width="0.85"/>
<rect x="760.12" y="259.70" width="9.50" height="1.50" fill="#0080ff"/>
<line x1="774.52" y1="252.20" x2="774.52" y2="268.70" stroke="#0080ff" stroke-width="0.85"/>
<rect x="769.77" y="257.70" width="9.50" height="0.85" fill="#0080ff"/>
<line x1="784.18" y1="260.20" x2="784.18" y2="286.20" stroke="#0080ff" stroke-width="0.85"/>
<rect x="779.43" y="260.20" width="9.50" height="14.00" fill="#0080ff"/>
<line x1="793.83" y1="239.10" x2="793.83" y2="277.70" stroke="#ff0000" stroke-width="0.85"/>
<rect x="789.08" y="255.20" width="9.50" height="19.50" fill="#ff0000"/>
<line x1="803.49" y1="227.60" x2="803.49" y2="257.70" stroke="#ff0000" stroke-width="0.85"/>
<rect x="798.74" y="239.10" width="9.50" height="14.10" fill="#ff0000"/>
<line x1="813.14" y1="229.10" x2="813.14" y2="247.70" stroke="#0080ff" stroke-width="0.85"/>
<rect x="808.39" y="235.10" width="9.50" height="6.00" fill="#0080ff"/>
<line x1="822.80" y1="235.10" x2="822.80" y2="256.20" stroke="#0080ff" stroke-width="0.85"/>
<rect x="818.05" y="242.10" width="9.50" height="11.60" fill="#0080ff"/>
<line x1="832.45" y1="252.70" x2="832.45" y2="274.70" stroke="#0080ff" stroke-width="0.85"/>
<rect x="827.70" y="255.70" width="9.50" height="0.85" fill="#0080ff"/>
<line x1="842.11" y1="244.70" x2="842.11" y2="274.70" stroke="#0080ff" stroke-width="0.85"/>
<rect x="837.36" y="259.20" width="9.50" height="8.00" fill="#0080ff"/>
<line x1="851.76" y1="256.70" x2="851.76" y2="274.20" stroke="#ff0000" stroke-width="0.85"/>
<rect x="847.01" y="260.20" width="9.50" height="9.50" fill="#ff0000"/>
<line x1="861.42" y1="250.20" x2="861.42" y2="269.20" stroke="#0080ff" stroke-width="0.85"/>
<rect x="856.67" y="257.70" width="9.50" height="3.50" fill="#0080ff"/>
<line x1="871.07" y1="261.20" x2="871.07" y2="285.70" stroke="#0080ff" stroke-width="0.85"/>
<rect x="866.32" y="263.20" width="9.50" height="14.00" fill="#0080ff"/>
<line x1="880.73" y1="257.70" x2="880.73" y2="284.20" stroke="#ff0000" stroke-width="0.85"/>
<rect x="875.98" y="263.70" width="9.50" height="15.00" fill="#ff0000"/>
<line x1="890.38" y1="254.20" x2="890.38" y2="287.70" stroke="#ff0000" stroke-width="0.85"/>
<rect x="885.63" y="260.20" width="9.50" height="2.50" fill="#ff0000"/>
<line x1="900.04" y1="247.20" x2="900.04" y2="274.70" stroke="#0080ff" stroke-width="0.85"/>
<rect x="895.29" y="257.70" width="9.50" height="17.00" fill="#0080ff"/>
<line x1="909.69" y1="245.70" x2="909.69" y2="277.20" stroke="#ff0000" stroke-width="0.85"/>
<rect x="904.94" y="258.20" width="9.50" height="16.00" fill="#ff0000"/>
<line x1="919.35" y1="243.30" x2="919.35" y2="256.40" stroke="#ff0000" stroke-width="0.85"/>
<rect x="914.60" y="248.50" width="9.50" height="6.70" fill="#ff0000"/>
<polyline fill="none" points="7.0,462.1 20.0,463.6 35.0,462.6 50.0,461.1 65.0,460.1 80.0,460.6 95.0,461.6 107.7,463.1 117.7,462.1 125.0,459.1 135.0,456.5 143.8,452.8 152.5,446.5 165.0,435.9 177.6,426.5 190.0,417.0 202.7,409.5 215.2,402.7 225.2,398.0 235.2,395.9 250.5,395.8 270.0,397.0 290.0,399.5 310.0,403.0 330.0,406.5 340.0,409.0 347.7,411.5 365.0,411.5 390.0,411.5 410.0,411.5 415.4,410.5 430.4,410.0 438.0,408.0 445.4,404.0 455.4,404.0 465.5,404.0 475.5,402.5 490.5,401.5 510.0,399.0 525.0,397.5 540.0,396.5 555.0,397.0 570.0,397.5 585.0,398.0 600.0,399.5 615.0,402.0 625.0,404.0 635.3,407.0 640.3,410.0 647.8,415.5 655.4,418.6 665.4,423.1 672.9,428.1 677.9,431.6 687.9,429.6 697.9,424.6 705.5,420.6 715.5,415.5 725.5,411.0 740.0,406.0 755.0,402.5 770.0,401.5 785.0,400.0 800.0,399.5 810.0,398.5 820.0,399.5 830.0,402.5 840.0,403.5 850.0,404.0 860.3,406.0 870.3,406.0 880.3,404.5 890.3,404.5 967.2,404.5" stroke="#c2b70f" stroke-width="1.1"/>
<polyline fill="none" points="7.0,498.2 15.0,497.2 25.0,494.7 30.0,495.2 40.0,498.2 50.0,498.7 60.0,500.7 75.0,502.7 90.0,504.7 105.0,504.7 117.7,504.7 125.0,506.2 135.0,507.7 145.0,509.2 155.0,513.2 165.0,517.7 175.0,520.2 185.0,521.7 195.0,523.2 205.0,524.7 215.0,524.2 225.0,523.7 235.5,519.2 240.0,515.7 250.0,509.2 265.0,500.2 280.0,488.2 290.0,480.7 305.0,467.2 315.0,459.1 322.7,454.1 330.0,450.6 340.0,444.6 347.7,439.6 357.7,438.6 365.0,439.6 375.0,441.1 390.0,441.1 415.0,441.1 435.4,441.1 445.4,443.1 455.4,441.1 465.5,439.1 475.5,438.6 481.0,439.1 487.5,440.1 495.0,443.6 505.0,448.6 515.0,454.1 525.0,458.1 535.0,462.1 542.6,465.1 555.0,467.2 570.0,470.7 585.0,472.7 600.0,474.2 615.0,475.7 625.0,477.7 632.8,479.2 640.3,478.2 647.8,474.7 655.4,473.2 665.4,471.2 672.9,468.2 679.1,465.1 688.0,466.1 695.4,468.7 705.5,470.7 715.5,471.2 725.0,472.2 735.0,470.2 750.0,468.2 765.0,466.7 775.0,463.6 790.0,460.6 805.0,456.6 815.0,454.1 822.7,451.1 830.0,445.6 840.0,440.6 850.0,437.6 860.0,432.1 870.0,428.6 880.0,427.1 890.0,425.1 900.0,425.1 922.9,425.1 925.4,426.0 967.2,426.0" stroke="#c2b70f" stroke-width="1.1"/>
<polyline fill="none" points="7.0,471.1 25.0,471.6 40.0,471.1 60.0,470.1 75.0,471.1 90.0,472.6 105.0,473.1 115.0,473.1 125.0,470.1 135.0,468.6 145.0,466.1 155.0,461.1 165.0,455.6 168.8,453.4 177.6,449.0 190.0,443.4 202.7,438.4 215.2,433.4 227.7,428.3 240.2,425.2 252.8,422.7 268.0,421.4 275.0,420.3 280.5,419.6 286.8,418.6 305.6,417.7 333.0,417.7 338.0,418.5 363.0,418.6 365.7,419.2 396.0,419.2 410.0,418.8 420.0,418.0 430.0,417.5 440.4,415.0 450.4,413.0 465.5,413.0 475.5,411.5 490.5,411.5 510.0,411.5 525.0,413.0 540.0,413.5 555.0,415.0 570.0,415.0 585.0,416.0 600.0,417.6 615.0,420.1 625.0,421.6 635.3,424.6 645.3,429.1 655.4,432.1 665.4,435.1 675.4,438.6 680.4,439.6 687.9,438.6 697.9,434.6 705.5,432.1 715.5,429.1 725.5,426.6 740.0,421.6 755.0,418.6 770.0,416.5 785.0,415.0 795.0,414.5 805.0,414.0 820.0,412.5 840.0,412.0 860.0,412.0 870.0,411.5 880.0,410.0 895.0,409.5 950.5,409.5 953.0,410.3 967.2,410.3" stroke="#00c800" stroke-width="1.15" stroke-dasharray="1.5 0.9"/>
<polyline fill="none" points="7.0,489.2 15.0,488.2 25.0,486.6 32.5,487.1 40.0,489.2 50.0,489.7 65.0,490.7 75.0,492.2 90.0,493.7 105.0,493.7 125.0,494.7 140.0,495.2 155.0,496.2 170.0,497.7 180.0,497.7 195.0,496.7 205.0,496.7 215.0,495.2 225.0,493.2 235.5,489.7 240.0,487.2 255.0,478.7 270.0,470.2 288.0,461.0 300.6,453.4 315.6,444.6 327.0,440.8 338.2,437.1 348.2,432.7 355.7,431.5 360.7,432.1 368.2,433.4 378.3,434.4 390.0,434.4 415.0,434.1 430.0,434.1 445.4,433.6 455.4,432.1 465.5,430.6 475.5,430.1 482.0,430.6 490.0,432.1 500.0,435.1 510.0,439.1 520.0,442.1 530.0,445.1 540.0,447.6 550.0,449.6 560.0,451.1 570.0,452.6 580.0,453.6 590.0,454.6 600.0,456.1 610.0,457.1 620.0,458.1 630.0,459.6 637.8,460.6 650.3,459.6 665.4,458.1 675.4,457.1 688.0,457.1 705.5,458.1 720.5,456.9 730.0,455.1 740.0,453.6 755.0,451.6 770.0,449.1 785.0,446.1 800.0,443.1 810.0,441.1 820.0,438.6 830.0,434.1 840.0,431.1 850.0,428.6 860.0,425.1 870.0,422.6 880.0,421.1 890.0,420.1 900.0,420.1 967.2,420.5" stroke="#00c800" stroke-width="1.15" stroke-dasharray="1.5 0.9"/>
<polyline fill="none" points="7.0,479.6 25.0,480.1 50.0,480.6 75.0,481.6 100.0,483.1 120.0,483.6 135.0,482.1 145.0,480.6 160.0,477.6 175.0,474.1 190.0,471.1 205.0,467.6 220.0,463.3 225.2,461.2 240.2,455.9 252.8,452.2 268.0,447.1 290.0,439.6 305.0,434.6 320.0,430.6 335.0,428.1 347.7,426.1 365.0,425.6 390.0,425.6 415.0,425.6 435.4,425.6 445.4,423.6 455.4,422.6 465.5,421.6 475.5,420.6 490.5,421.6 495.0,422.6 510.0,425.6 525.0,428.1 540.0,430.6 555.0,432.6 570.0,434.1 585.0,435.6 600.0,437.1 615.0,439.1 630.0,441.1 645.0,444.1 660.0,446.6 675.0,448.1 688.0,448.1 698.0,446.6 710.5,444.1 725.5,441.1 727.2,441.1 739.7,438.6 752.2,436.1 764.8,434.0 780.0,431.9 792.5,429.6 805.0,427.7 817.6,425.6 830.0,423.3 842.7,421.4 855.2,419.6 867.7,417.7 880.3,415.8 887.8,415.0 967.2,415.0" stroke="#ba0000" stroke-width="1.3"/>
<line x1="893.00" y1="415.10" x2="967.20" y2="415.10" stroke="#a00000" stroke-width="2.4"/>
<polyline fill="none" points="7.0,479.1 22.0,479.6 30.0,494.7 41.3,504.2 51.4,497.2 60.0,495.7 70.0,499.2 80.0,493.7 100.0,487.1 110.0,480.1 125.0,460.6 146.6,453.8 156.5,438.9 166.3,424.0 175.4,426.0 185.4,430.0 195.4,423.5 205.4,421.5 215.4,424.5 224.2,419.0 234.2,431.5 243.0,432.0 250.0,434.6 263.0,438.1 272.6,430.1 282.6,426.1 292.1,424.1 301.4,411.5 310.1,411.5 320.2,421.1 330.2,421.6 340.2,427.6 350.2,417.6 359.7,432.1 369.8,438.6 379.0,433.1 389.0,429.6 399.0,426.6 409.1,421.1 418.4,419.6 427.9,419.1 437.9,414.0 446.9,399.0 455.9,416.0 465.5,416.0 475.5,409.5 485.0,433.0 493.8,443.6 503.8,448.6 513.8,460.1 523.8,451.6 533.9,458.1 543.9,458.1 552.6,449.6 562.7,446.1 572.7,456.1 581.5,452.1 591.5,450.1 601.5,446.1 610.3,446.1 620.3,451.1 630.3,461.6 640.3,447.1 650.3,436.1 659.1,445.6 667.9,438.6 677.9,430.6 687.9,428.1 697.4,417.6 708.0,414.5 716.7,414.5 726.7,416.5 737.5,417.0 747.6,416.0 757.6,416.0 766.3,417.6 775.6,423.6 785.1,416.5 795.2,419.1 803.9,422.6 813.9,418.6 822.7,416.5 832.7,414.0 842.7,411.0 851.5,413.0 861.5,413.0 871.6,403.5 881.6,402.5 891.6,408.5 900.9,411.5 910.4,419.1 919.9,418.1" stroke="#ff0000" stroke-width="1.7" stroke-linejoin="round"/>
<rect x="6.60" y="401.00" width="136.80" height="57.20" fill="#ffffff"/>
<line x1="7.30" y1="415.20" x2="15.00" y2="415.20" stroke="#ff3030" stroke-width="1.1"/>
<line x1="7.30" y1="424.70" x2="15.00" y2="424.70" stroke="#20e020" stroke-width="1.1" stroke-dasharray="1.6 1"/>
<line x1="7.30" y1="434.20" x2="15.00" y2="434.20" stroke="#20e020" stroke-width="1.1" stroke-dasharray="1.6 1"/>
<line x1="7.30" y1="443.70" x2="15.00" y2="443.70" stroke="#f0e020" stroke-width="1.1"/>
<line x1="7.30" y1="453.20" x2="15.00" y2="453.20" stroke="#f0e020" stroke-width="1.1"/>
<rect x="70.60" y="20.60" width="38.20" height="13.20" fill="#ffffff"/>
<rect x="97.30" y="21.40" width="10.50" height="11.60" fill="#e4e4e4" stroke="#b8b8b8" stroke-width="0.6"/>
<path d="M100.2 25.6 l2.3 -2.6 l2.3 2.6z M100.2 28.7 l2.3 2.6 l2.3 -2.6z" fill="#222"/>
<rect x="190.60" y="20.60" width="38.20" height="13.20" fill="#ffffff"/>
<rect x="217.30" y="21.40" width="10.50" height="11.60" fill="#e4e4e4" stroke="#b8b8b8" stroke-width="0.6"/>
<path d="M220.2 25.6 l2.3 -2.6 l2.3 2.6z M220.2 28.7 l2.3 2.6 l2.3 -2.6z" fill="#222"/>
<rect x="270.80" y="20.60" width="35.20" height="13.20" fill="#ffffff"/>
<rect x="294.50" y="21.40" width="10.50" height="11.60" fill="#e4e4e4" stroke="#b8b8b8" stroke-width="0.6"/>
<path d="M297.4 25.6 l2.3 -2.6 l2.3 2.6z M297.4 28.7 l2.3 2.6 l2.3 -2.6z" fill="#222"/>
<rect x="113.50" y="21.00" width="0.80" height="12.50" fill="#f4f6fa"/>
<rect x="112.70" y="21.00" width="0.80" height="12.50" fill="#b9bdc8"/>
<rect x="233.00" y="21.00" width="0.80" height="12.50" fill="#f4f6fa"/>
<rect x="232.20" y="21.00" width="0.80" height="12.50" fill="#b9bdc8"/>
<rect x="310.00" y="21.00" width="0.80" height="12.50" fill="#f4f6fa"/>
<rect x="309.20" y="21.00" width="0.80" height="12.50" fill="#b9bdc8"/>
<rect x="333.00" y="21.00" width="0.80" height="12.50" fill="#f4f6fa"/>
<rect x="332.20" y="21.00" width="0.80" height="12.50" fill="#b9bdc8"/>
<rect x="412.30" y="21.00" width="0.80" height="12.50" fill="#f4f6fa"/>
<rect x="411.50" y="21.00" width="0.80" height="12.50" fill="#b9bdc8"/>
<rect x="458.00" y="21.00" width="0.80" height="12.50" fill="#f4f6fa"/>
<rect x="457.20" y="21.00" width="0.80" height="12.50" fill="#b9bdc8"/>
<path d="M262.4 25.6 h4.4 l-2.2 2.6z" fill="#222"/>
<path d="M429.3 26.2 h4.2 l-2.1 2.7z" fill="#222"/>
<path d="M8.5 4.2 V14.4 H18.9" fill="none" stroke="#7a7a7a" stroke-width="1"/>
<polyline points="9.9,11.8 11.6,9.2 13.4,10.1 14.9,7.1 16.3,5.4 17.9,8.7" fill="none" stroke="#3c8ce8" stroke-width="1"/>
<circle cx="9.9" cy="11.8" r="0.85" fill="#f0324a"/>
<circle cx="11.6" cy="9.2" r="0.85" fill="#f0324a"/>
<circle cx="13.4" cy="10.1" r="0.85" fill="#f0324a"/>
<circle cx="14.9" cy="7.1" r="0.85" fill="#f0324a"/>
<circle cx="16.3" cy="5.4" r="0.85" fill="#f0324a"/>
<circle cx="17.9" cy="8.7" r="0.85" fill="#f0324a"/>
<rect x="313.0" y="20.0" width="14.6" height="14.0" fill="#e6e6ea"/>
<path d="M313.5 34.0 V20.5 H327.6" fill="none" stroke="#7b8088" stroke-width="1.1"/>
<path d="M313.5 33.6 H327.1 V20.5" fill="none" stroke="#f8f8fa" stroke-width="1.1"/>
<rect x="314" y="20.8" width="12.8" height="1.2" fill="#a4a8ac"/>
<line x1="317.3" y1="21.6" x2="317.3" y2="32.8" stroke="#7474c6" stroke-width="1.3"/>
<line x1="315" y1="24.9" x2="326" y2="24.9" stroke="#9a9adc" stroke-width="1.5"/>
<path d="M319.4 27.4 h3.6 l-1.2 1.2 l2.6 2.6 l-1.1 1.1 l-2.6 -2.6 l-1.3 1.3z" fill="#9224b4"/>
<rect x="336.0" y="20.0" width="14.5" height="14.0" fill="#a9adb1"/>
<path d="M336.5 34.0 V20.5 H350.5" fill="none" stroke="#7b8088" stroke-width="1.1"/>
<path d="M336.5 33.6 H350.0 V20.5" fill="none" stroke="#f8f8fa" stroke-width="1.1"/>
<path d="M338.9 22.9 l7.4 2.6 l-2.4 1.3 l3.6 3.7 l-1.5 1.5 l-3.7 -3.6 l-1.2 2.5z" fill="#f4f0ff" stroke="#6e50c4" stroke-width="1.1" stroke-linejoin="round"/>
<path d="M357.2 32.2 c-0.6 -1.8 -1.6 -2.6 -2.2 -4 c-0.3 -0.9 0.6 -1.4 1.4 -0.8 l0.9 0.9 l-0.5 -4.6 c-0.1 -1 1.3 -1.2 1.5 -0.2 l0.4 2 l0 -3.2 c0 -1 1.5 -1 1.6 0 l0.2 2.9 l0.5 -2.6 c0.2 -0.9 1.5 -0.7 1.5 0.2 l-0.1 3 l0.7 -1.6 c0.4 -0.8 1.5 -0.4 1.4 0.5 c-0.2 2.2 -0.3 5.3 -2.2 7.6z" fill="#fff1dc" stroke="#dfa044" stroke-width="1" stroke-linejoin="round"/>
<line x1="375.4" y1="30.4" x2="383.8" y2="22.6" stroke="#e9a846" stroke-width="4" stroke-linecap="round"/>
<line x1="376" y1="29.9" x2="383.6" y2="22.8" stroke="#fbe2b6" stroke-width="1.5"/>
<path d="M373.4 32.4 l1 -2.9 l1.9 1.9z" fill="#c88a3a"/>
<line x1="394" y1="30.3" x2="401.8" y2="22.8" stroke="#4a7ce0" stroke-width="4.1" stroke-linecap="round"/>
<line x1="394.6" y1="29.6" x2="401.6" y2="22.9" stroke="#b8d0ff" stroke-width="1.4"/>
<path d="M391.9 32.4 l1.1 -2.8 l1.8 1.8z" fill="#3060c0"/>
<path d="M398.2 29.4 l3.2 -3 l2 2.6 l-3 3.4z" fill="#2a52a4"/>
<rect x="416.3" y="22" width="10.8" height="10.6" fill="#e9e9ea"/>
<path d="M416.5 22 V32.6 H427.1" fill="none" stroke="#8a8a8c" stroke-width="0.8"/>
<rect x="417.5" y="27.6" width="1.7" height="4.3" fill="#2290ff"/>
<rect x="420.0" y="22.7" width="1.7" height="9.2" fill="#2290ff"/>
<rect x="422.4" y="24.4" width="1.7" height="7.5" fill="#2290ff"/>
<rect x="424.9" y="28.0" width="1.7" height="3.9" fill="#2290ff"/>
<rect x="438.3" y="22" width="10.8" height="10.6" fill="#e9e9ea"/>
<path d="M438.5 22 V32.6 H449.1" fill="none" stroke="#8a8a8c" stroke-width="0.8"/>
<rect x="439.5" y="27.6" width="1.7" height="4.3" fill="#2290ff"/>
<rect x="442.0" y="22.7" width="1.7" height="9.2" fill="#2290ff"/>
<rect x="444.4" y="24.4" width="1.7" height="7.5" fill="#2290ff"/>
<rect x="446.9" y="28.0" width="1.7" height="3.9" fill="#2290ff"/>
<path d="M439.7 22.8 L448.1 31.2 M448.1 22.8 L439.7 31.2" stroke="#f0324a" stroke-width="1.3" fill="none"/>
<path d="M468.3 29.6 A3.9 3.9 0 1 1 465.6 23.4" fill="none" stroke="#1c8cf0" stroke-width="1.6"/>
<path d="M463.6 21.2 h3.6 v3.4z" fill="#2058ff"/>
<text x="467.5" y="29.4" font-family="Liberation Sans, sans-serif" font-weight="bold" font-size="6.6" fill="#2070e0">R</text>
<line x1="1003.3" y1="31.6" x2="1009.6" y2="25.6" stroke="#6666ee" stroke-width="2.3" stroke-linecap="round"/>
<path d="M1012.6 22 a3.2 3.2 0 1 0 1.2 3.4 l-2.4 0.5 l-1.3 -1.5 z" fill="#6c6cf0"/>
<rect x="957.4" y="4.4" width="7.6" height="8" fill="#ececec" stroke="#7a7a7a" stroke-width="1"/>
<rect x="960.4" y="6.6" width="7.4" height="6" fill="#e4e4e4" stroke="#6a6a6a" stroke-width="1"/>
<rect x="974.8" y="2.9" width="13.1" height="13.6" rx="2.2" fill="url(#bg)" stroke="#a6a6a6" stroke-width="1"/>
<rect x="990.8" y="2.9" width="13.2" height="13.6" rx="2.2" fill="url(#bg)" stroke="#a6a6a6" stroke-width="1"/>
<rect x="1006.8" y="2.9" width="13.2" height="13.6" rx="2.2" fill="url(#bg)" stroke="#a6a6a6" stroke-width="1"/>
<rect x="978.4" y="11" width="5.2" height="1.5" fill="#4a4a4a"/>
<rect x="994.4" y="6.6" width="6" height="5.4" fill="none" stroke="#4a4a4a" stroke-width="1"/><rect x="993.9" y="6.1" width="7" height="1.4" fill="#4a4a4a"/>
<path d="M1010.4 6.6 l6 6 M1016.4 6.6 l-6 6" stroke="#4a4a4a" stroke-width="1.3" fill="none"/>
</svg>
<div id="tx">
<div class="ui" style="left:24.0px;top:3.2px;">金[先限連続]1.00 - 白金[先限連続]1.00</div>
<div class="ui tb" style="left:8.2px;top:21.7px;">金</div>
<div class="ui tb" style="left:27.5px;top:21.7px;">先限連続</div>
<div class="ui tb" style="left:118.6px;top:21.7px;">白金</div>
<div class="ui tb" style="left:147.5px;top:21.7px;">先限連続</div>
<div class="ui tb" style="left:239.8px;top:21.7px;">日足</div>
<div class="ui tb sp" style="left:72.6px;top:21.2px;">1.00</div>
<div class="ui tb sp" style="left:192.6px;top:21.2px;">1.00</div>
<div class="ui tb sp" style="left:272.8px;top:21.2px;">100</div>
<div class="cc" style="left:6.0px;top:37.4px;width:1013.8px;height:129.0px">
<div class="t ax" style="left:967.6px;top:-2.0px;"><span class="l" style="width:28.68px">10,000</span></div>
<div class="t ax" style="left:967.6px;top:36.5px;"><span class="l" style="width:23.90px">9,500</span></div>
<div class="t ax" style="left:967.6px;top:75.2px;"><span class="l" style="width:23.90px">9,000</span></div>
<div class="t ax" style="left:967.6px;top:114.0px;"><span class="l" style="width:23.90px">8,500</span></div>
<div class="t ax" style="left:30.1px;top:115.7px;"><span class="l" style="width:9.56px">10</span></div>
<div class="t ax" style="left:232.9px;top:115.7px;"><span class="l" style="width:9.56px">11</span></div>
<div class="t ax" style="left:426.1px;top:115.7px;"><span class="l" style="width:9.56px">12</span></div>
<div class="t ax" style="left:629.0px;top:115.7px;"><span class="l" style="width:9.56px">01</span></div>
<div class="t ax" style="left:812.5px;top:115.7px;"><span class="l" style="width:9.56px">02</span></div>
<div class="t ax" style="left:629.0px;top:104.4px;"><span class="l" style="width:19.12px">2024</span></div>
<div class="t pb" style="left:966.7px;top:25.4px;width:47.1px;height:17.0px;line-height:16.4px;"><span class="l" style="width:25.00px">9,661</span></div>
<div class="t info" style="left:-0.6px;top:2.1px;">日付<span class="l" style="width:59.16px">:2024/02/16 </span>始値<span class="l" style="width:34.51px">:9,627 </span>高値<span class="l" style="width:34.51px">:9,678 </span>安値<span class="l" style="width:34.51px">:9,625 </span>終値<span class="l" style="width:29.58px">:9,661</span></div>
</div>
<div class="cc" style="left:6.0px;top:171.5px;width:1013.8px;height:212.9px">
<div class="t ax" style="left:967.6px;top:6.4px;"><span class="l" style="width:23.90px">4,500</span></div>
<div class="t ax" style="left:967.6px;top:46.3px;"><span class="l" style="width:23.90px">4,400</span></div>
<div class="t ax" style="left:967.6px;top:86.1px;"><span class="l" style="width:23.90px">4,300</span></div>
<div class="t ax" style="left:967.6px;top:126.0px;"><span class="l" style="width:23.90px">4,200</span></div>
<div class="t ax" style="left:967.6px;top:165.8px;"><span class="l" style="width:23.90px">4,100</span></div>
<div class="t ax" style="left:967.6px;top:205.7px;"><span class="l" style="width:23.90px">4,000</span></div>
<div class="t ax" style="left:30.1px;top:199.6px;"><span class="l" style="width:9.56px">10</span></div>
<div class="t ax" style="left:232.9px;top:199.6px;"><span class="l" style="width:9.56px">11</span></div>
<div class="t ax" style="left:426.1px;top:199.6px;"><span class="l" style="width:9.56px">12</span></div>
<div class="t ax" style="left:629.0px;top:199.6px;"><span class="l" style="width:9.56px">01</span></div>
<div class="t ax" style="left:812.5px;top:199.6px;"><span class="l" style="width:9.56px">02</span></div>
<div class="t ax" style="left:629.0px;top:188.3px;"><span class="l" style="width:19.12px">2024</span></div>
<div class="t pb" style="left:966.7px;top:69.1px;width:47.1px;height:17.1px;line-height:16.5px;"><span class="l" style="width:25.00px">4,347</span></div>
<div class="t info" style="left:-0.6px;top:2.5px;">日付<span class="l" style="width:59.16px">:2024/02/16 </span>始値<span class="l" style="width:34.51px">:4,330 </span>高値<span class="l" style="width:34.51px">:4,360 </span>安値<span class="l" style="width:34.51px">:4,327 </span>終値<span class="l" style="width:29.58px">:4,347</span></div>
</div>
<div class="cc" style="left:6.0px;top:389.4px;width:1013.8px;height:155.7px">
<div class="t ax" style="left:967.6px;top:-1.4px;"><span class="l" style="width:23.90px">5,500</span></div>
<div class="t ax" style="left:967.6px;top:26.5px;"><span class="l" style="width:23.90px">5,250</span></div>
<div class="t ax" style="left:967.6px;top:54.4px;"><span class="l" style="width:23.90px">5,000</span></div>
<div class="t ax" style="left:967.6px;top:82.3px;"><span class="l" style="width:23.90px">4,750</span></div>
<div class="t ax" style="left:967.6px;top:110.2px;"><span class="l" style="width:23.90px">4,500</span></div>
<div class="t ax" style="left:967.6px;top:138.1px;"><span class="l" style="width:23.90px">4,250</span></div>
<div class="t ax" style="left:30.1px;top:141.9px;"><span class="l" style="width:9.56px">10</span></div>
<div class="t ax" style="left:232.9px;top:141.9px;"><span class="l" style="width:9.56px">11</span></div>
<div class="t ax" style="left:426.1px;top:141.9px;"><span class="l" style="width:9.56px">12</span></div>
<div class="t ax" style="left:629.0px;top:141.9px;"><span class="l" style="width:9.56px">01</span></div>
<div class="t ax" style="left:812.5px;top:141.9px;"><span class="l" style="width:9.56px">02</span></div>
<div class="t ax" style="left:629.0px;top:130.6px;"><span class="l" style="width:19.12px">2024</span></div>
<div class="t pb" style="left:966.7px;top:21.3px;width:47.1px;height:16.6px;line-height:16.0px;"><span class="l" style="width:25.00px">5,314</span></div>
<div class="t info" style="left:-0.6px;top:2.0px;"><span class="l" style="width:4.93px">[</span>金<span class="l" style="width:4.93px"> </span>先限連続<span class="l" style="width:29.58px"> 9,661</span><span class="f g">×</span><span class="l" style="width:24.65px">1.00]</span>－<span class="l" style="width:4.93px">[</span>白金<span class="l" style="width:4.93px"> </span>先限連続<span class="l" style="width:29.58px"> 4,347</span><span class="f g">×</span><span class="l" style="width:29.58px">1.00] </span>終値<span class="l" style="width:4.93px"> </span>日付<span class="l" style="width:83.81px">:2024/02/16 5,314</span></div>
<div class="t lg" style="left:1.8px;top:12.4px;">ボリンジャーバンド<span class="l" style="width:4.35px">(</span>金<span class="l" style="width:4.35px"> </span>白金<span class="l" style="width:4.35px">)</span><span class="f g">△</span><span class="f g">×</span></div>
<div class="t lg b" style="left:9.6px;top:21.9px;">基準線<span class="l" style="width:91.35px">(21)(0)(SMA)(C):5,340</span></div>
<div class="t lg b" style="left:9.6px;top:31.4px;">幅１上限<span class="l" style="width:26.10px">(+1.00</span><span class="f">σ</span><span class="l" style="width:30.45px">):5,388</span></div>
<div class="t lg b" style="left:9.6px;top:40.8px;">幅１下限<span class="l" style="width:26.10px">(-1.00</span><span class="f">σ</span><span class="l" style="width:30.45px">):5,291</span></div>
<div class="t lg b" style="left:9.6px;top:50.3px;">幅２上限<span class="l" style="width:26.10px">(+1.96</span><span class="f">σ</span><span class="l" style="width:30.45px">):5,435</span></div>
<div class="t lg b" style="left:9.6px;top:59.8px;">幅２下限<span class="l" style="width:26.10px">(-1.96</span><span class="f">σ</span><span class="l" style="width:30.45px">):5,244</span></div>
</div>
</div>
</div>
</body></html>
